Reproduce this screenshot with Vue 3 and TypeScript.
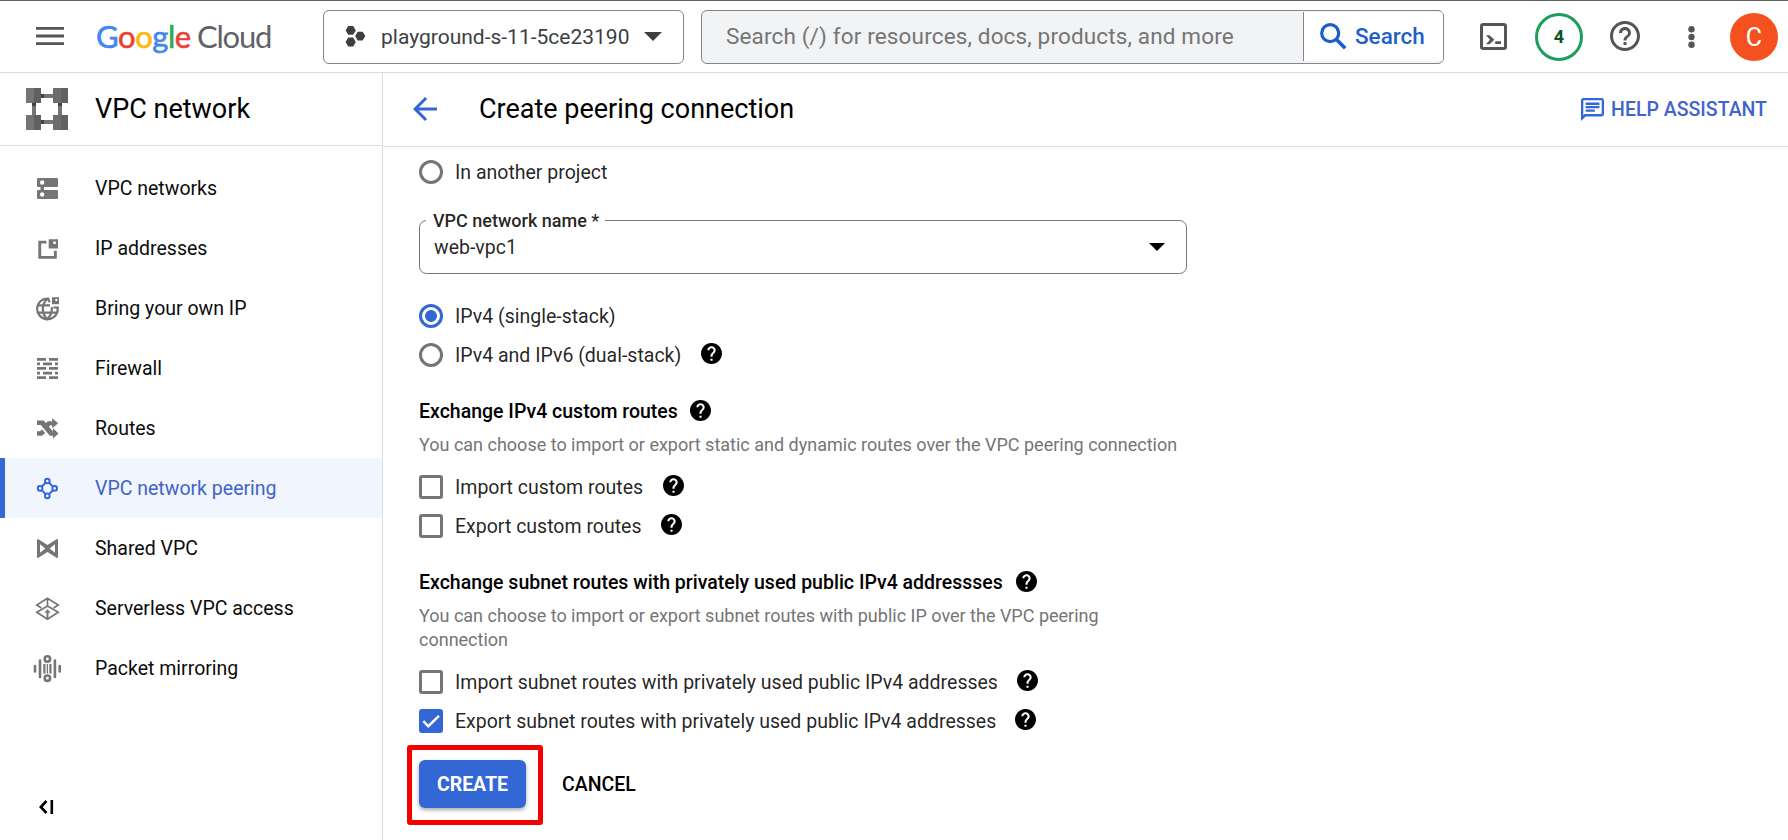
<script setup lang="ts">
import { defineComponent, h, ref } from 'vue'

interface NavItem {
  id: string
  label: string
}

const navItems: NavItem[] = [
  { id: 'networks', label: 'VPC networks' },
  { id: 'addresses', label: 'IP addresses' },
  { id: 'byoip', label: 'Bring your own IP' },
  { id: 'firewall', label: 'Firewall' },
  { id: 'routes', label: 'Routes' },
  { id: 'peering', label: 'VPC network peering' },
  { id: 'shared', label: 'Shared VPC' },
  { id: 'serverless', label: 'Serverless VPC access' },
  { id: 'mirroring', label: 'Packet mirroring' },
]
const activeNav = ref('peering')

const stack = ref<'single' | 'dual'>('single')
const importCustom = ref(false)
const exportCustom = ref(false)
const importSubnet = ref(false)
const exportSubnet = ref(true)

const HELP_PATH =
  'M12 2C6.48 2 2 6.48 2 12s4.48 10 10 10 10-4.48 10-10S17.52 2 12 2zm1 17h-2v-2h2v2zm2.07-7.75l-.9.92C13.45 12.9 13 13.5 13 15h-2v-.5c0-1.1.45-2.1 1.17-2.83l1.24-1.26c.37-.36.59-.86.59-1.41 0-1.1-.9-2-2-2s-2 .9-2 2H8c0-2.21 1.79-4 4-4s4 1.79 4 4c0 .88-.36 1.68-.93 2.25z'

const HelpIcon = defineComponent({
  render: () =>
    h('svg', { width: 21, height: 21, viewBox: '2 2 20 20' }, [
      h('path', { d: HELP_PATH, fill: '#000' }),
    ]),
})
</script>

<template>
  <div class="page">
    <header class="topbar">
      <svg class="menu" width="28" height="18" viewBox="0 0 28 18">
        <path d="M0 0h28v2.8H0zM0 7.6h28v2.8H0zM0 15.2h28V18H0z" fill="#555" />
      </svg>
      <div class="logo">
        <span class="google"><span class="b">G</span><span class="r">o</span><span class="y">o</span><span class="b">g</span><span class="gr">l</span><span class="r">e</span></span>
        <span class="cloud">Cloud</span>
      </div>
      <button class="project">
        <svg width="21" height="23" viewBox="0 0 21 23">
          <path
            d="M3.2 1h5l2.6 4.4-2.6 4.4h-5L.6 5.400zM12.700 6.700h5l2.600 4.400-2.600 4.400h-5l-2.600-4.400zM3.200 12.600h5l2.600 4.400-2.600 4.400h-5L.6 17z"
            fill="#3c4043"
          />
        </svg>
        <span class="project-name">playground-s-11-5ce23190</span>
        <svg class="caret" width="18" height="9" viewBox="0 0 18 9"><path d="M0 0h18L9 9z" fill="#3c4043" /></svg>
      </button>
      <div class="search">
        <div class="search-input">Search (/) for resources, docs, products, and more</div>
        <button class="search-btn">
          <svg width="27" height="27" viewBox="0 0 27 27" fill="none" stroke="#1a5dcc">
            <circle cx="10.200" cy="10.200" r="8.500" stroke-width="3.200" />
            <path d="M16.200 16.200l9 9" stroke-width="3.600" />
          </svg>
          <span>Search</span>
        </button>
      </div>
      <svg class="shell" width="27" height="27" viewBox="0 0 27 27">
        <rect x="1.500" y="1.500" width="24" height="24" rx="1.800" fill="none" stroke="#555" stroke-width="3" />
        <path d="M6 12.200h3.600l4.800 4.500-4.800 4.500H6l4-4.500zM15.200 18.200h5.800v2.700h-5.800z" fill="#555" />
      </svg>
      <div class="count">4</div>
      <svg class="help-outline" width="30" height="30" viewBox="2 2 20 20">
        <path
          fill="#555"
          d="M11 18h2v-2h-2v2zm1-16C6.480 2 2 6.480 2 12s4.480 10 10 10 10-4.480 10-10S17.520 2 12 2zm0 18c-4.410 0-8-3.590-8-8s3.590-8 8-8 8 3.590 8 8-3.590 8-8 8zm0-14c-2.210 0-4 1.790-4 4h2c0-1.100.9-2 2-2s2 .9 2 2c0 2-3 1.750-3 5h2c0-2.250 3-2.500 3-5 0-2.210-1.790-4-4-4z"
        />
      </svg>
      <svg class="more" width="7" height="22" viewBox="0 0 7 22" fill="#555">
        <circle cx="3.500" cy="3.300" r="3.200" /><circle cx="3.500" cy="11" r="3.200" /><circle cx="3.500" cy="18.700" r="3.200" />
      </svg>
      <div class="avatar">C</div>
    </header>

    <div class="body">
      <aside class="sidebar">
        <div class="product">
          <svg width="42" height="42" viewBox="0 0 42 42" shape-rendering="crispEdges">
            <path d="M15 6h12v4H15zM15 32h12v4H15zM6 15h4v12H6zM32 15h4v12h-4z" fill="#757575" />
            <path d="M15 6h3v4h-3zM15 32h3v4h-3zM6 15h4v3H6zM32 15h4v3h-4z" fill="#424242" />
            <path d="M0 0h15v15H0zM27 0h15v15H27zM0 27h15v15H0zM27 27h15v15H27z" fill="#757575" />
            <path d="M8 0h7v15H8zM35 0h7v15h-7zM8 27h7v15H8zM35 27h7v15h-7z" fill="#616161" />
            <path d="M27 0h8v15h-8zM27 27h8v15h-8z" fill="#6d6d6d" />
          </svg>
          <span>VPC network</span>
        </div>
        <nav>
          <a v-for="item in navItems" :key="item.id" class="nav-item" :class="{ active: item.id === activeNav }" @click="activeNav = item.id">
            <svg class="nav-icon" width="30" height="30" viewBox="0 0 30 30" fill="currentColor">
              <path
                v-if="item.id === 'networks'"
                fill-rule="evenodd"
                d="M6.200 5h18.600q1.200 0 1.200 1.200v6.600q0 1.200-1.200 1.200H12v3h12.800q1.200 0 1.200 1.200v6.600q0 1.200-1.200 1.200H6.200Q5 26 5 24.800v-6.600Q5 17 6.200 17H8.500v-3H6.200Q5 14 5 12.800V6.200Q5 5 6.200 5zM10.200 7.300a2.200 2.200 0 1 0 0 4.400a2.200 2.200 0 1 0 0-4.400zM10.200 19.300a2.200 2.200 0 1 0 0 4.400a2.200 2.200 0 1 0 0-4.400z"
              />
              <path
                v-else-if="item.id === 'addresses'"
                fill-rule="evenodd"
                d="M6.300 7.700h8.200v2.800H9.200v12.400h12.700v-5.200h2.900v8H6.300zM16.700 6.300H26v9.300h-9.300zM21.300 8.500v2.500h2.500V8.500z"
              />
              <g v-else-if="item.id === 'byoip'">
                <g fill="none" stroke="currentColor" stroke-width="2.200">
                  <path d="M17.500 5.800A10.300 10.300 0 1 0 25.600 14" />
                  <path d="M15.300 5.700c-6 6-6 14.400 0 20.500c3.400-3.500 4.900-7.800 4.500-12.200M15.300 5.700q1.600 1.600 2.600 3.500M6 12.300h12M5.800 19.600h19" />
                  <path d="M21.500 14.500h5" />
                </g>
                <path fill-rule="evenodd" d="M20 4.300h7v7h-7zM23.300 6v2h2V6z" />
              </g>
              <path
                v-else-if="item.id === 'firewall'"
                d="M5 5h9v2.700H5zM17 5h9v2.700h-9zM5 9.600h3v2.700H5zM11 9.600h9v2.700h-9zM23 9.600h3v2.700h-3zM5 14.100h9v2.700H5zM17 14.100h9v2.700h-9zM5 18.700h3v2.700H5zM11 18.700h9v2.700h-9zM23 18.700h3v2.700h-3zM5 23.300h9V26H5zM17 23.300h9V26h-9z"
              />
              <path
                v-else-if="item.id === 'routes'"
                d="M5 7.500h6.700l9 10.800h.3v-3l5.500 5.200-5.500 5.200v-3h-3.200l-9-10.800H5zM20.200 5.300l6 5-6 5v-3h-1.600l-2.700 2.300-3-3.500 3-2.800h4.300zM5 18.300h3l2.200-1.900 3 3.500-3.200 2.800H5z"
              />
              <g v-else-if="item.id === 'peering'" fill="none" stroke="currentColor" stroke-width="2">
                <circle cx="15.300" cy="8" r="2.300" /><circle cx="8.100" cy="15.400" r="2.300" />
                <circle cx="22.700" cy="15.400" r="2.300" /><circle cx="15.300" cy="22.900" r="2.300" />
                <path d="M13.600 9.700l-3.800 3.900M17 9.700l4 3.900M9.800 17.200l3.800 3.900M21 17.200l-4 3.900" />
              </g>
              <path
                v-else-if="item.id === 'shared'"
                fill-rule="evenodd"
                d="M5 7q0-1.500 1.400-.8L15.500 12l9.100-5.800Q26 5.500 26 7v17q0 1.500-1.400.8L15.500 19l-9.100 5.800Q5 25.500 5 24zM8 11.300v8.400l5.300-4.200zM23 11.300v8.400l-5.300-4.200z"
              />
              <g v-else-if="item.id === 'serverless'" fill="none" stroke="currentColor" stroke-width="1.700">
                <path d="M9.300 15L4.800 12 15.500 5.300 26.200 12 21.700 15M15.500 5v8M15.500 13L4.800 19.300 15.500 26.200 26.200 19.300z" />
                <path d="M15.500 26v-8" stroke-width="2" />
                <path d="M12.300 19.800l3.200-3.500 3.200 3.500z" fill="currentColor" stroke="none" />
              </g>
              <g v-else fill="none" stroke="currentColor" stroke-width="2.600">
                <circle cx="15.400" cy="6" r="2.700" /><circle cx="15.400" cy="25.200" r="2.700" />
                <g stroke-linecap="round">
                  <path d="M3 13v5.500M8 7.500v16.500M22.900 7.500v16.500M27.700 13v5.500" />
                </g>
                <path d="M12.400 11v9.500M18.400 11v9.500" stroke-width="2.200" />
                <path d="M15.400 11v9.500" stroke-width="1.300" />
              </g>
            </svg>
            <span>{{ item.label }}</span>
          </a>
        </nav>
        <svg class="collapse" width="15" height="14" viewBox="0 0 15 14" fill="none" stroke="#000" stroke-width="2.600">
          <path d="M7.500 1L1.800 7l5.700 6M12.800 0v14" />
        </svg>
      </aside>

      <main class="main">
        <div class="titlebar">
          <svg class="back" width="24" height="24" viewBox="4 4 16 16">
            <path fill="#3367d6" d="M20 11H7.830l5.590-5.590L12 4l-8 8 8 8 1.410-1.410L7.830 13H20v-2z" />
          </svg>
          <h1>Create peering connection</h1>
          <a class="assistant">
            <svg width="23" height="23" viewBox="2 2 20 20">
              <path fill="#3367d6" d="M4 4h16v12H5.170L4 17.170V4m0-2c-1.100 0-1.990.9-1.990 2L2 22l4-4h14c1.100 0 2-.9 2-2V4c0-1.100-.9-2-2-2H4zm2 10h8v2H6v-2zm0-3h12v2H6V9zm0-3h12v2H6V6z" />
            </svg>
            <span>HELP ASSISTANT</span>
          </a>
        </div>

        <form class="form" @submit.prevent>
          <label class="row"><i class="radio"></i><span>In another project</span></label>

          <fieldset class="select">
            <legend>VPC network name *</legend>
            <span>web-vpc1</span>
            <svg width="16" height="8" viewBox="0 0 16 8"><path d="M0 0h16L8 8z" /></svg>
          </fieldset>

          <label class="row" @click="stack = 'single'">
            <i class="radio" :class="{ on: stack === 'single' }"></i><span>IPv4 (single-stack)</span>
          </label>
          <label class="row" @click="stack = 'dual'">
            <i class="radio" :class="{ on: stack === 'dual' }"></i><span>IPv4 and IPv6 (dual-stack)</span><HelpIcon class="help" />
          </label>

          <h2 class="h-first">Exchange IPv4 custom routes <HelpIcon class="help" /></h2>
          <p>You can choose to import or export static and dynamic routes over the VPC peering connection</p>
          <div class="checks">
            <div class="row" @click="importCustom = !importCustom">
              <i class="check" :class="{ on: importCustom }"></i><span>Import custom routes</span><HelpIcon class="help" />
            </div>
            <div class="row" @click="exportCustom = !exportCustom">
              <i class="check" :class="{ on: exportCustom }"></i><span>Export custom routes</span><HelpIcon class="help" />
            </div>
          </div>

          <h2>Exchange subnet routes with privately used public IPv4 addressses <HelpIcon class="help" /></h2>
          <p>You can choose to import or export subnet routes with public IP over the VPC peering connection</p>
          <div class="checks subnet">
            <div class="row" @click="importSubnet = !importSubnet">
              <i class="check" :class="{ on: importSubnet }"></i><span>Import subnet routes with privately used public IPv4 addresses</span><HelpIcon class="help" />
            </div>
            <div class="row" @click="exportSubnet = !exportSubnet">
              <i class="check" :class="{ on: exportSubnet }">
                <svg v-if="exportSubnet" width="24" height="24" viewBox="0 0 24 24" fill="none" stroke="#fff" stroke-width="2.400">
                  <path d="M4.300 12.200l5 5L20 6.800" />
                </svg>
              </i><span>Export subnet routes with privately used public IPv4 addresses</span><HelpIcon class="help" />
            </div>
          </div>

          <div class="actions">
            <div class="marked"><button class="create">CREATE</button></div>
            <button class="cancel">CANCEL</button>
          </div>
        </form>
      </main>
    </div>
  </div>
</template>

<style>
body {
  background: #fff;
  overflow: hidden;
}
</style>

<style scoped>
* {
  box-sizing: border-box;
}
.page {
  display: flex;
  flex-direction: column;
  width: 1788px;
  height: 840px;
  font-family: Roboto, sans-serif;
  font-size: 19.5px;
  color: rgba(0, 0, 0, 0.87);
  background: #fff;
  overflow: hidden;
}
svg {
  display: block;
  flex: none;
}
button {
  font: inherit;
  padding: 0;
  background: none;
  border: 0;
}

/* Top bar */
.topbar {
  display: flex;
  align-items: center;
  height: 73px;
  flex: none;
  border-top: 1px solid #5f5f63;
  border-bottom: 1px solid #dadce0;
}
.menu {
  margin: 0 0 2px 36px;
}
.logo {
  display: flex;
  width: 226px;
  margin: 0 0 2px 32px;
  font-family: Lato, sans-serif;
  font-size: 31px;
  line-height: 40px;
}
.google {
  width: 101px;
  letter-spacing: -0.450px;
  -webkit-text-stroke: 0.600px;
}
.cloud {
  color: #5f6368;
  letter-spacing: -1.200px;
}
.b { color: #4285f4; -webkit-text-stroke-color: #4285f4; }
.r { color: #ea4335; -webkit-text-stroke-color: #ea4335; }
.y { color: #fbbc04; -webkit-text-stroke-color: #fbbc04; }
.gr { color: #34a853; -webkit-text-stroke-color: #34a853; }
.project {
  display: flex;
  align-items: center;
  width: 361px;
  height: 54px;
  margin-left: 1px;
  padding-left: 21px;
  border: 1px solid #80868b;
  border-radius: 6px;
  font-size: 21px;
  color: #3c4043;
}
.project-name {
  width: 263px;
  margin-left: 15px;
  text-align: left;
}
.search {
  display: flex;
  width: 743px;
  height: 54px;
  margin-left: 17px;
  border: 1px solid #80868b;
  border-radius: 6px;
  background: #f1f3f4;
  overflow: hidden;
  font-size: 22.500px;
  line-height: 50px;
}
.search-input {
  flex: 1;
  padding-left: 24px;
  color: #757575;
  letter-spacing: 0.150px;
}
.search-btn {
  display: flex;
  align-items: center;
  gap: 8px;
  width: 140px;
  margin: 1px 0 2px;
  padding-left: 16px;
  border-left: 1px solid #80868b;
  background: #fff;
  color: #1f5fc8;
  font-weight: 500;
  line-height: 48px;
}
.shell {
  margin-left: 36px;
}
.count {
  width: 48px;
  height: 48px;
  margin-left: 28px;
  border: 3px solid #1e9e5c;
  border-radius: 50%;
  color: #0d5227;
  font-size: 18px;
  font-weight: 700;
  line-height: 42px;
  text-align: center;
}
.help-outline {
  margin: 0 0 1px 27px;
}
.more {
  margin-left: 48px;
}
.avatar {
  width: 48px;
  height: 48px;
  margin-left: 35px;
  border-radius: 50%;
  background: #f4511e;
  color: #fff;
  font-size: 25px;
  line-height: 49px;
  text-align: center;
}

/* Sidebar */
.body {
  display: flex;
  flex: 1;
}
.sidebar {
  display: flex;
  flex-direction: column;
  width: 383px;
  border-right: 1px solid #dadce0;
}
.product {
  display: flex;
  align-items: center;
  gap: 27px;
  height: 73px;
  padding-left: 26px;
  border-bottom: 1px solid #dadce0;
  color: #000;
  font-size: 27px;
}
nav {
  padding-top: 12px;
}
.nav-item {
  display: flex;
  align-items: center;
  gap: 33px;
  height: 60px;
  padding-left: 27px;
  border-left: 5px solid transparent;
  color: #0c0c0c;
}
.nav-icon {
  color: #757575;
}
.nav-item.active {
  border-left-color: #3367d6;
  background: #f0f5fe;
  color: #4064c8;
}
.nav-item.active .nav-icon {
  color: #3367d6;
}
.collapse {
  margin: auto 0 26px 39px;
}

/* Main column */
.main {
  flex: 1;
}
.titlebar {
  display: flex;
  align-items: center;
  height: 74px;
  padding: 0 21px 2px 30px;
  border-bottom: 1px solid #dadce0;
}
h1 {
  margin: 0 0 0 42px;
  color: #000;
  font-size: 27px;
  font-weight: 400;
}
.assistant {
  display: flex;
  align-items: center;
  gap: 7px;
  margin: 2px 0 0 auto;
  color: #3f65cc;
  font-weight: 500;
}
.form {
  width: 804px;
  padding: 6px 0 0 36px;
}
.row {
  display: flex;
  align-items: center;
  height: 39px;
}
.row span {
  margin-left: 12px;
}
.row .help {
  margin: -4px 0 0 20px;
}
.subnet .help {
  margin-left: 19px;
}
.radio,
.check {
  width: 24px;
  height: 24px;
  margin-bottom: 1px;
  border: 3px solid #757575;
}
.radio {
  border-radius: 50%;
}
.radio.on {
  border-color: #3367d6;
  background: radial-gradient(circle, #3367d6 5.500px, transparent 6.300px);
}
.check {
  border-radius: 3px;
}
.check.on {
  border: 0;
  background: #3367d6;
}
.select {
  display: flex;
  height: 62px;
  min-width: 0;
  margin: 20px 0 23px;
  padding: 0 21px 0 14px;
  border: 1px solid #757575;
  border-radius: 7.500px;
}
.select legend {
  margin-left: -8px;
  padding: 0 6px 0 7px;
  font-size: 18px;
  font-weight: 500;
  line-height: 17px;
}
.select span {
  flex: 1;
  line-height: 38px;
}
.select svg {
  margin-top: 14px;
}
h2 {
  display: flex;
  align-items: center;
  height: 30px;
  margin: 21px 0 7px;
  color: #000;
  font-size: 19.500px;
  font-weight: 500;
}
h2 .help {
  margin: -1px 0 0 13px;
}
h2.h-first {
  margin: 21px 0 7px;
}
h2.h-first .help {
  margin: -1px 0 0 12px;
}
p {
  margin: 0 0 11px;
  color: #757575;
  font-size: 18px;
  line-height: 24px;
}
.actions {
  display: flex;
  align-items: center;
  margin-top: 19px;
}
.marked {
  position: relative;
}
.marked::after {
  content: '';
  position: absolute;
  inset: -15px -17px -17px -12px;
  border: 5px solid #f40000;
  border-radius: 3px;
}
.create {
  display: block;
  width: 107px;
  height: 48px;
  border-radius: 6px;
  background: #3367d6;
  box-shadow: 0 2px 4px rgba(0, 0, 0, 0.350);
  color: #fff;
  font-weight: 700;
}
.cancel {
  margin-left: 36px;
  color: #000;
  font-weight: 500;
}
</style>
